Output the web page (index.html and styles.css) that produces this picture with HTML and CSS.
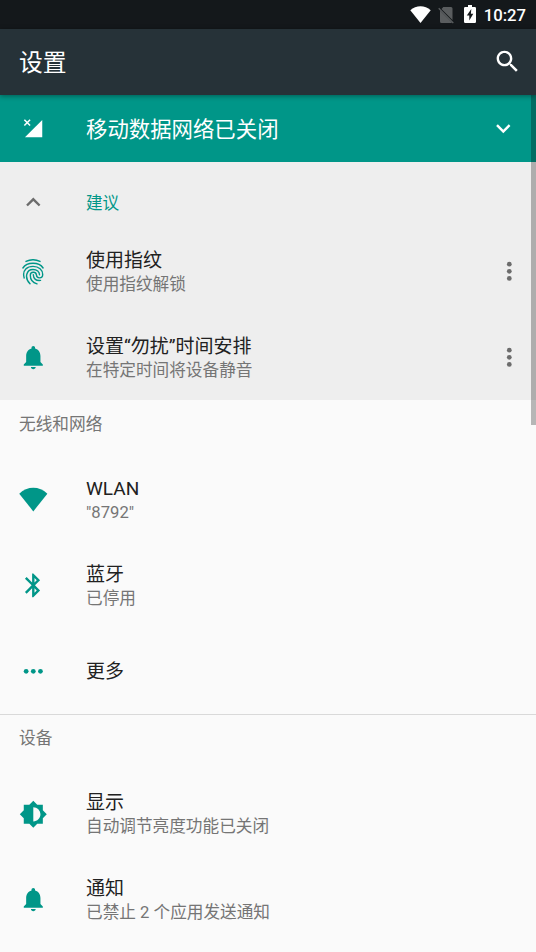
FILE: index.html
```html
<!DOCTYPE html>
<html lang="zh-CN">
<head>
<meta charset="utf-8">
<title>设置</title>
<link rel="stylesheet" href="styles.css">
</head>
<body>
<svg class="defs" width="0" height="0">
  <symbol id="bell" viewBox="0 0 24 24"><path d="M12 22c1.1 0 2-.6 2-1.8h-4c0 1.200.9 1.800 2 1.800zm6-6v-5c0-3.070-1.640-5.640-4.500-6.320V4c0-.83-.67-1.500-1.500-1.500s-1.500.67-1.500 1.500v.68C7.630 5.360 6 7.920 6 11v5l-2 2v1h16v-1l-2-2z"/></symbol>
  <symbol id="more" viewBox="0 0 24 24"><circle cx="12" cy="6" r="2"/><circle cx="12" cy="12" r="2"/><circle cx="12" cy="18" r="2"/></symbol>
</svg>
<header class="status">
  <svg class="s-wifi" viewBox="0 0 21 17"><path d="M0.300 4.200C6-1.100 15-1.100 20.700 4.200L10.500 17z"/></svg>
  <svg class="s-sim" viewBox="0 0 17 18"><path d="M5.300 1H13q1.500 0 1.500 1.500V14L3.500 3zM2 4.600L14 16.600q-.4.400-1 .4H3.500Q2 17 2 15.500z"/><path class="slash" d="M.7 2.300L15.300 17"/></svg>
  <svg class="s-bat" viewBox="0 0 12 18"><path d="M4 0h4v2h2.800q1.200 0 1.200 1.200v13.600q0 1.200-1.200 1.200H1.200Q0 18 0 16.800V3.200Q0 2 1.200 2H4z"/><path class="bolt" d="M7.300 4L2.800 10.600h2.500V15.500L9.300 8.800H6.900z"/></svg>
  <span class="clock">10:27</span>
</header>
<div class="appbar">
  <h1>设置</h1>
  <svg class="search" viewBox="0 0 24 24"><path d="M15.500 14h-.79l-.28-.27C15.410 12.590 16 11.110 16 9.500 16 5.910 13.090 3 9.500 3S3 5.910 3 9.500 5.910 16 9.500 16c1.610 0 3.090-.59 4.230-1.570l.27.28v.79l5 4.990L20.490 19l-4.990-5zm-6 0C7.010 14 5 11.990 5 9.500S7.010 5 9.500 5 14 7.010 14 9.500 11.990 14 9.500 14z"/></svg>
</div>
<main>
  <div class="scrollbar"></div>
  <section class="condition">
    <div class="lead"><svg class="icon" viewBox="0 0 24 24"><path d="M19.500 5v14.500H5z"/><path class="cross" d="M4.500 4.800l4.800 4.800M9.300 4.800L4.500 9.600"/></svg></div>
    <div class="grow">移动数据网络已关闭</div>
    <svg class="icon chevron" viewBox="0 0 24 24"><path d="M7.410 7.840L12 12.420l4.590-4.580L18 9.250l-6 6-6-6z"/></svg>
  </section>
  <section class="suggestions">
    <div class="suggest-head">
      <div class="lead"><svg class="icon gray" viewBox="0 0 24 24"><path d="M7.410 15.410L12 10.830l4.590 4.580L18 14l-6-6-6 6z"/></svg></div>
      <span>建议</span>
    </div>
    <div class="row">
      <div class="lead"><svg class="finger" viewBox="0 0 22 26"><path d="M4 2.400Q11-1 18 2.400M.9 9C5 2.700 17 2.700 21.100 9M2.200 19C-.3 10.500 6 7.400 11 7.400C17 7.400 20.700 11 20.700 15.500C20.700 20 14.600 20 14.400 15.800C14 12.400 8.300 12.400 8.300 16.200C8.300 20.700 11 23.700 15 24.800M8 24.800C2 18.500 4.500 10.500 11 10.500C15 10.500 17.500 13 17.500 15.700M11.300 15.800C11.500 20 14 21.900 18.500 21.400"/></svg></div>
      <div class="grow"><div class="title">使用指纹</div><div class="sub">使用指纹解锁</div></div>
      <svg class="icon gray menu"><use href="#more"/></svg>
    </div>
    <div class="row">
      <div class="lead"><svg class="icon"><use href="#bell"/></svg></div>
      <div class="grow"><div class="title">设置“勿扰”时间安排</div><div class="sub">在特定时间将设备静音</div></div>
      <svg class="icon gray menu"><use href="#more"/></svg>
    </div>
  </section>
  <section class="group">
    <h2>无线和网络</h2>
    <div class="row">
      <div class="lead"><svg class="icon" viewBox="0 0 24 24"><path d="M.2 6.400C7-.05 17-.05 23.800 6.400L12 21.300z"/></svg></div>
      <div class="grow"><div class="title">WLAN</div><div class="sub">"8792"</div></div>
    </div>
    <div class="row">
      <div class="lead"><svg class="icon" viewBox="0 0 24 24"><path d="M17.710 7.710L12 2h-1v7.590L6.410 5 5 6.410 10.590 12 5 17.590 6.410 19 11 14.410V22h1l5.710-5.710-4.300-4.290 4.300-4.290zM13 5.830l1.880 1.880L13 9.590V5.830zm1.880 10.460L13 18.170v-3.760l1.880 1.880z"/></svg></div>
      <div class="grow"><div class="title">蓝牙</div><div class="sub">已停用</div></div>
    </div>
    <div class="row">
      <div class="lead"><svg class="icon" viewBox="0 0 24 24"><circle cx="6" cy="12" r="2"/><circle cx="12" cy="12" r="2"/><circle cx="18" cy="12" r="2"/></svg></div>
      <div class="grow"><div class="title">更多</div></div>
    </div>
  </section>
  <section class="group divided">
    <h2>设备</h2>
    <div class="row">
      <div class="lead"><svg class="icon" viewBox="0 0 24 24"><path d="M20 15.310L23.310 12 20 8.690V4h-4.690L12 .69 8.690 4H4v4.690L.69 12 4 15.310V20h4.690L12 23.310 15.310 20H20v-4.690zM12 18V6c3.310 0 6 2.690 6 6s-2.690 6-6 6z"/></svg></div>
      <div class="grow"><div class="title">显示</div><div class="sub">自动调节亮度功能已关闭</div></div>
    </div>
    <div class="row">
      <div class="lead"><svg class="icon"><use href="#bell"/></svg></div>
      <div class="grow"><div class="title">通知</div><div class="sub">已禁止 2 个应用发送通知</div></div>
    </div>
  </section>
</main>
</body>
</html>
```
FILE: styles.css
```css
* { box-sizing: border-box; }
body {
  margin: 0;
  width: 536px;
  height: 952px;
  overflow: hidden;
  background: #fafafa;
  color: #212121;
  font-family: Roboto, "Noto Sans CJK SC", sans-serif;
}
svg { display: block; flex: none; fill: currentColor; }
.defs { position: absolute; }
.status {
  display: flex;
  align-items: center;
  justify-content: flex-end;
  height: 29px;
  padding-right: 10px;
  background: #14181b;
  color: #fff;
}
.s-wifi { width: 21px; height: 17px; margin-right: 7px; }
.s-sim { width: 17px; height: 18px; margin-right: 9px; color: #5a5d5f; }
.slash { fill: none; stroke: currentColor; stroke-width: 1.3; }
.s-bat { width: 12px; height: 18px; margin: 0 8px 1px 0; }
.bolt { fill: #14181b; }
.clock { font-size: 16.7px; font-weight: 500; line-height: 29px; padding-top: 2px; }
.appbar {
  position: relative;
  z-index: 1;
  display: flex;
  align-items: center;
  justify-content: space-between;
  height: 66px;
  padding: 0 14px 0 19px;
  background: #263238;
  color: #fff;
  box-shadow: 0 1px 5px rgba(0, 0, 0, .4);
}
h1 { margin: 0; padding-top: 2px; font-size: 23.8px; font-weight: 400; line-height: 36px; }
.search { width: 29px; height: 29px; margin-bottom: 1px; }
main { position: relative; }
.scrollbar {
  position: absolute;
  top: 0;
  right: 0;
  width: 5px;
  height: 330px;
  background: rgba(0, 0, 0, .27);
}
.condition {
  display: flex;
  align-items: center;
  height: 67px;
  padding-right: 18.5px;
  background: #009688;
  color: #fff;
  font-size: 21.4px;
}
.condition .grow { padding-bottom: 3px; }
.cross { fill: none; stroke: currentColor; stroke-width: 1.3; }
.chevron { margin-top: 2px; }
.lead { display: flex; flex: none; width: 86px; padding-left: 19px; color: #009688; }
.condition .lead { color: #fff; }
.icon { width: 28.6px; height: 28.6px; }
.grow { flex: 1; min-width: 0; }
.gray { color: #6c6c6c; }
.finger {
  width: 22px;
  height: 26px;
  margin: 1px 0 0 3px;
  fill: none;
  stroke: currentColor;
  stroke-width: 1.4;
  stroke-linecap: round;
}
.suggestions { height: 238px; background: #eee; }
.suggest-head {
  display: flex;
  align-items: center;
  height: 66.6px;
  padding-top: 14px;
  color: #009688;
  font-size: 16.6px;
}
.row { display: flex; align-items: center; height: 85.7px; }
.row .grow { padding-top: 2px; }
.group .row .grow { padding-top: 1px; }
.menu { margin-right: 12.2px; }
.title { font-size: 19px; line-height: 25px; }
.sub { color: #757575; font-size: 16.65px; line-height: 23px; }
h2 {
  height: 57px;
  margin: 0;
  padding-left: 19px;
  color: #757575;
  font-size: 16.7px;
  font-weight: 400;
  line-height: 50px;
}
.divided { border-top: 1px solid #d9d9d9; }
.divided h2 { height: 56px; line-height: 48px; }
```
